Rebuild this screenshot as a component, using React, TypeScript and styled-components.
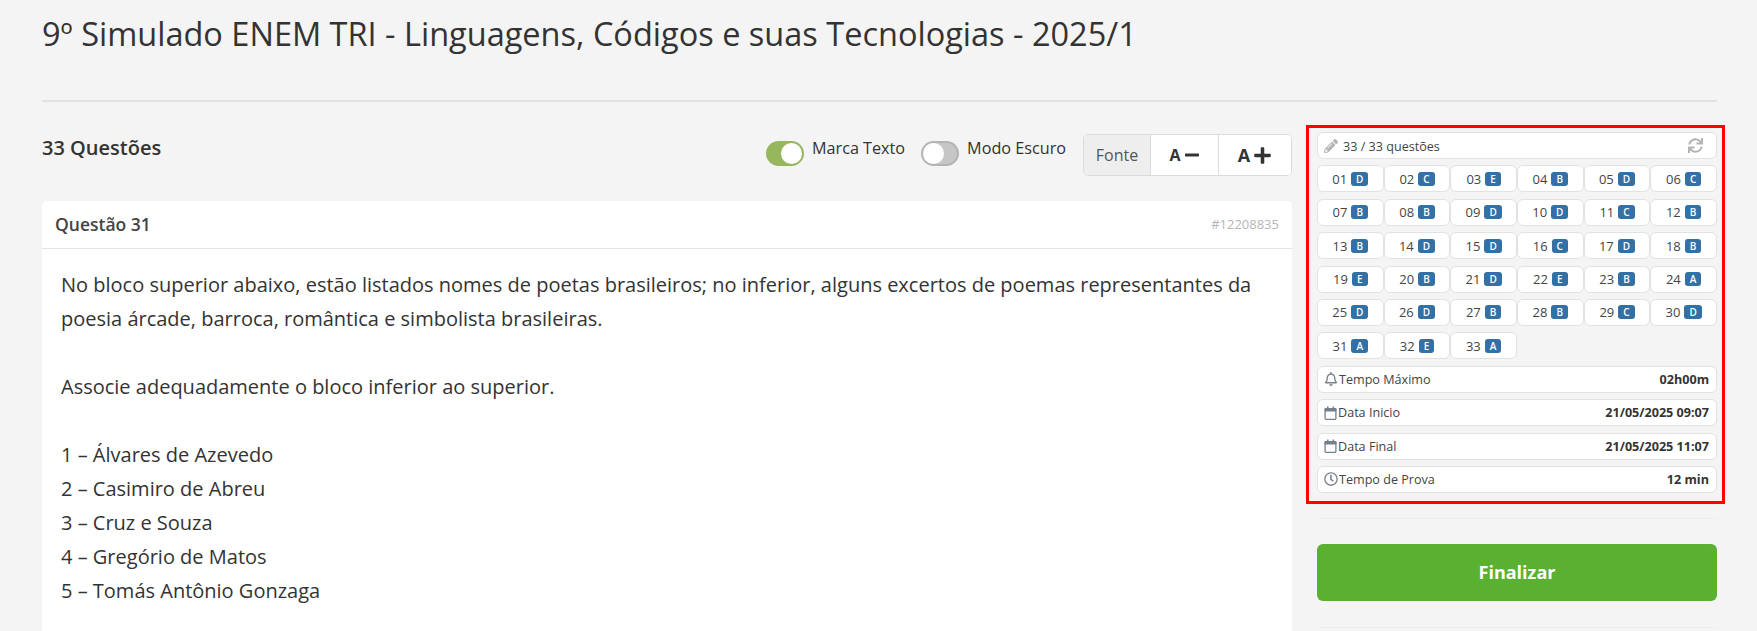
import React from 'react';
import styled, { createGlobalStyle } from 'styled-components';
import { FaMinus, FaPencilAlt, FaPlus, FaRegBell, FaRegClock, FaSync } from 'react-icons/fa';

const GlobalStyle = createGlobalStyle`
    html, body {
        margin: 0;
        height: 631px;
        overflow: hidden;
        background: #f4f4f4;
    }
    body {
        font-family: "Open Sans", sans-serif;
        color: #333;
    }
`;

const Page = styled.div`
    padding: 0 40px 0 42px;
    width: 1757px;
    box-sizing: border-box;
`;

const Title = styled.h1`
    margin: 0;
    height: 102px;
    padding-top: 12px;
    box-sizing: border-box;
    font-size: 32.5px;
    line-height: 44px;
    font-weight: 400;
    border-bottom: 2px solid #e2e2e2;
`;

const Columns = styled.div`
    display: flex;
    margin-top: 24px;
`;

const Main = styled.div`
    width: 1250px;
    flex: none;
`;

const Toolbar = styled.div`
    height: 75px;
    display: flex;
    justify-content: space-between;
    align-items: flex-start;
`;

const Count = styled.div`
    font-size: 20px;
    line-height: 26px;
    font-weight: 600;
    margin-top: 9px;
`;

const Controls = styled.div`
    display: flex;
    align-items: flex-start;
    padding-top: 8px;
`;

const ToggleLabel = styled.span`
    font-size: 16.2px;
    line-height: 24px;
    margin: 2px 0 0 8px;
`;

const ToggleTrack = styled.span<{ $on?: boolean }>`
    display: flex;
    justify-content: ${props => (props.$on ? 'flex-end' : 'flex-start')};
    width: 38px;
    height: 25px;
    margin: 7px 0 0 ${props => (props.$on ? '0' : '16px')};
    box-sizing: border-box;
    border-radius: 13px;
    background: ${props => (props.$on ? '#96b75e' : '#c6c6c6')};
    border: 2px solid ${props => (props.$on ? '#96b75e' : '#b4b4b4')};
    &::after {
        content: '';
        width: 21px;
        height: 21px;
        border-radius: 50%;
        background: #fff;
    }
`;

const FontGroup = styled.div`
    display: flex;
    height: 42px;
    width: 209px;
    margin-left: 17px;
    box-sizing: border-box;
    border: 1px solid #dcdcdc;
    border-radius: 5px;
    background: #fff;
    overflow: hidden;
`;

const FontCell = styled.div<{ $size?: number; $width: number; $label?: boolean }>`
    width: ${props => props.$width}px;
    flex: none;
    display: flex;
    align-items: center;
    justify-content: center;
    gap: 3px;
    box-sizing: border-box;
    font-size: ${props => props.$size ?? 16}px;
    font-weight: ${props => (props.$label ? 400 : 700)};
    color: ${props => (props.$label ? '#555' : '#333')};
    background: ${props => (props.$label ? '#eeeeee' : '#fff')};
    & + & {
        border-left: 1px solid #dcdcdc;
    }
`;

const Card = styled.div`
    background: #fff;
    border-radius: 4px 4px 0 0;
    height: 440px;
`;

const CardHeader = styled.div`
    height: 48px;
    padding: 0 13px 2px;
    box-sizing: border-box;
    border-bottom: 1px solid #e4e4e4;
    display: flex;
    justify-content: space-between;
    align-items: center;
`;

const CardTitle = styled.span`
    font-size: 17.5px;
    font-weight: 600;
    color: #444;
`;

const QuestionId = styled.span`
    font-size: 13px;
    color: #b5b5b5;
`;

const Statement = styled.div`
    padding: 19px 19px;
    font-size: 20px;
    line-height: 34px;
    color: #333;
`;

const Line = styled.p`
    margin: 0;
    min-height: 34px;
    white-space: nowrap;
`;

const Side = styled.aside`
    margin-left: 14px;
    width: 419px;
    flex: none;
    margin-top: -1px;
`;

const Highlight = styled.div`
    border: 3px solid #ff0000;
    padding: 4px 5px 8px 8px;
    box-sizing: border-box;
    display: flex;
    flex-direction: column;
    gap: 6.4px;
`;

const Pill = styled.div`
    height: 27px;
    box-sizing: border-box;
    border: 1px solid #e2e2e2;
    border-radius: 6px;
    background: #fff;
    font-size: 12.6px;
    color: #444;
`;

const InfoRow = styled(Pill)`
    display: flex;
    align-items: center;
    justify-content: space-between;
    padding: 0 7px 0 6px;
    svg {
        color: #76808a;
        flex: none;
    }
`;

const InfoLabel = styled.span`
    display: flex;
    align-items: center;
    gap: 1px;
`;

const CountLabel = styled(InfoLabel)`
    gap: 5px;
    padding-top: 1px;
    svg {
        color: #b4b4b4;
    }
`;

const InfoValue = styled.strong`
    font-weight: 700;
    color: #333;
`;

const RefreshIcon = styled(FaSync)`
    color: #b4b4b4 !important;
    margin-right: 6px;
`;

const AnswerGrid = styled.div`
    display: grid;
    grid-template-columns: repeat(6, 1fr);
    row-gap: 6.4px;
`;

const AnswerCell = styled(Pill)`
    display: flex;
    align-items: center;
    justify-content: center;
    gap: 4px;
    font-size: 13px;
`;

const Badge = styled.span`
    background: #3270a6;
    color: #fff;
    border-radius: 3px;
    font-size: 10px;
    font-weight: 600;
    line-height: 14px;
    height: 14px;
    padding: 0 5px;
`;

const Divider = styled.hr`
    border: 0;
    border-top: 1px solid #eeeeee;
    margin: 14px 8px 0 11px;
`;

const FinishButton = styled.button`
    display: block;
    width: 400px;
    height: 57px;
    margin: 25px 0 26px 11px;
    border: 0;
    border-radius: 6px;
    background: #5ab031;
    color: #fff;
    font-family: inherit;
    font-size: 18px;
    font-weight: 700;
`;

// bloco cheio no topo, como o calendario do original
const CalendarIcon = () => (
    <svg width="13" height="14" viewBox="0 0 13 14" aria-hidden="true">
        <path d="M3 0.5h1.5v2H3zM8.5 0.5H10v2H8.5z" fill="currentColor" />
        <rect x="0.5" y="2" width="12" height="3.5" rx="1" fill="currentColor" />
        <rect x="1.1" y="2.6" width="10.8" height="10.8" rx="1.2" fill="none" stroke="currentColor" strokeWidth="1.3" />
    </svg>
);

const answers = 'DCEBDCBBDDCBBDDCDBEBDEBADDBBCDAEA'.split('');

const statement = [
    'No bloco superior abaixo, estão listados nomes de poetas brasileiros; no inferior, alguns excertos de poemas representantes da',
    'poesia árcade, barroca, romântica e simbolista brasileiras.',
    '',
    'Associe adequadamente o bloco inferior ao superior.',
    '',
    '1 – Álvares de Azevedo',
    '2 – Casimiro de Abreu',
    '3 – Cruz e Souza',
    '4 – Gregório de Matos',
    '5 – Tomás Antônio Gonzaga',
];

const App = () => (
    <Page>
        <GlobalStyle />
        <Title>9º Simulado ENEM TRI - Linguagens, Códigos e suas Tecnologias - 2025/1</Title>
        <Columns>
            <Main>
                <Toolbar>
                    <Count>33 Questões</Count>
                    <Controls>
                        <ToggleTrack $on />
                        <ToggleLabel>Marca Texto</ToggleLabel>
                        <ToggleTrack />
                        <ToggleLabel>Modo Escuro</ToggleLabel>
                        <FontGroup>
                            <FontCell $width={66} $label>
                                Fonte
                            </FontCell>
                            <FontCell $width={68}>
                                A<FaMinus size={16} />
                            </FontCell>
                            <FontCell $width={73} $size={18}>
                                A<FaPlus size={19} />
                            </FontCell>
                        </FontGroup>
                    </Controls>
                </Toolbar>
                <Card>
                    <CardHeader>
                        <CardTitle>Questão 31</CardTitle>
                        <QuestionId>#12208835</QuestionId>
                    </CardHeader>
                    <Statement>
                        {statement.map((line, index) => (
                            <Line key={index}>{line}</Line>
                        ))}
                    </Statement>
                </Card>
            </Main>
            <Side>
                <Highlight>
                    <InfoRow>
                        <CountLabel>
                            <FaPencilAlt size={14} />
                            33 / 33 questões
                        </CountLabel>
                        <RefreshIcon size={15} />
                    </InfoRow>
                    <AnswerGrid>
                        {answers.map((answer, index) => (
                            <AnswerCell key={index}>
                                {String(index + 1).padStart(2, '0')}
                                <Badge>{answer}</Badge>
                            </AnswerCell>
                        ))}
                    </AnswerGrid>
                    <InfoRow>
                        <InfoLabel>
                            <FaRegBell size={14} />
                            Tempo Máximo
                        </InfoLabel>
                        <InfoValue>02h00m</InfoValue>
                    </InfoRow>
                    <InfoRow>
                        <InfoLabel>
                            <CalendarIcon />
                            Data Inicio
                        </InfoLabel>
                        <InfoValue>21/05/2025 09:07</InfoValue>
                    </InfoRow>
                    <InfoRow>
                        <InfoLabel>
                            <CalendarIcon />
                            Data Final
                        </InfoLabel>
                        <InfoValue>21/05/2025 11:07</InfoValue>
                    </InfoRow>
                    <InfoRow>
                        <InfoLabel>
                            <FaRegClock size={14} />
                            Tempo de Prova
                        </InfoLabel>
                        <InfoValue>12 min</InfoValue>
                    </InfoRow>
                </Highlight>
                <Divider />
                <FinishButton>Finalizar</FinishButton>
                <Divider />
            </Side>
        </Columns>
    </Page>
);

export default App;
